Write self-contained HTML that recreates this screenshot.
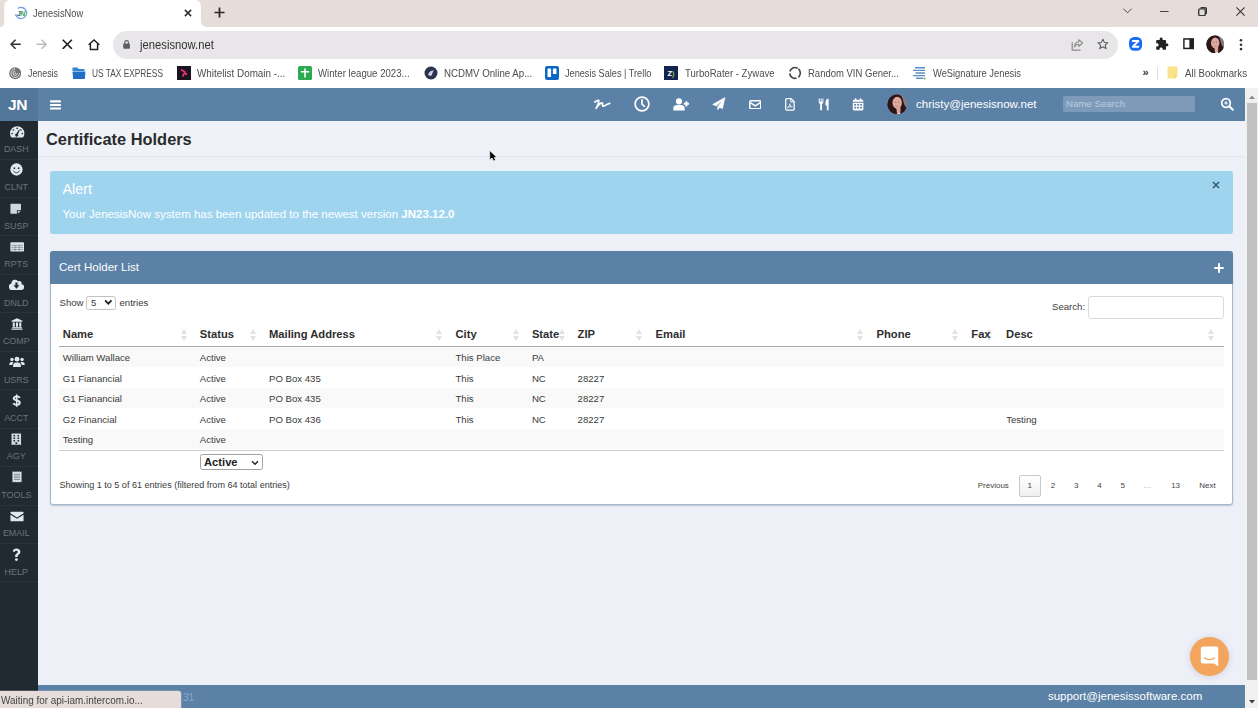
<!DOCTYPE html>
<html lang="en">
<head>
<meta charset="utf-8">
<title>JenesisNow</title>
<style>
*{box-sizing:border-box;margin:0;padding:0}
html,body{width:1258px;height:708px;overflow:hidden;background:#edf0f7;font-family:"Liberation Sans",Arial,sans-serif;font-size:12px;color:#333}
.abs{position:absolute}
#root{position:relative;width:1258px;height:708px;overflow:hidden;background:#edf0f7}
/* ---------- browser chrome ---------- */
#tabstrip{left:0;top:0;width:1258px;height:27px;background:#e6dcd9}
.ctext{font-family:"Liberation Sans",sans-serif;color:#3b3b3b;white-space:nowrap}
#toolbar{left:0;top:27px;width:1258px;height:34px;background:#fff}
#omni{left:112.500px;top:30.500px;width:1005px;height:28.500px;border-radius:14.250px;background:#e8e6e9}
#bookbar{left:0;top:61px;width:1258px;height:27px;background:#fff}
.bm{position:absolute;top:66px;height:14px;line-height:14px;font-size:11.3px;color:#4d4d4d;white-space:nowrap}
/* ---------- app ---------- */
#apphead{left:0;top:88px;width:1245px;height:33px;background:#5c81a6}
#logo{left:0;top:88px;width:38px;height:33px;background:#53779b;color:#fff;font-weight:bold;font-size:15.5px;line-height:33px;text-align:center;letter-spacing:-0.3px;padding-right:3px}
#side{left:0;top:121px;width:38px;height:587px;background:#222a31}
.sitem{position:absolute;left:0;width:38px;height:38.5px;border-bottom:1px solid #2b343c;text-align:center}
.sitem span{position:absolute;left:-4.700px;width:42px;top:22.900px;font-size:8.960px;line-height:11px;color:#68747e;text-align:center}
.sitem svg{position:absolute;left:9px;top:3px;width:14px;height:14px;fill:#e1e8ed}
#titlebar{left:38px;top:121px;width:1207px;height:36px;background:#f0f2f9;border-bottom:1px solid #e3e6ed}
#title{left:46px;top:128px;font-size:16.4px;font-weight:bold;color:#2b2b2b;line-height:22px;white-space:nowrap}
#alert{left:50px;top:170.800px;width:1182.500px;height:62.800px;background:#9fd4ef;border-radius:3px}
#card{left:50px;top:251px;width:1182.500px;height:253.600px;background:#fff;border:1px solid #a6b9cc;box-shadow:0 1px 1.500px rgba(110,130,160,.400);border-radius:3px}
#cardhead{left:50px;top:251px;width:1182.500px;height:33px;background:#5c81a6;border-radius:3px 3px 0 0}
.t{position:absolute;white-space:nowrap;line-height:14px;font-size:11px;color:#3a3a3a}
.th{z-index:2;position:absolute;white-space:nowrap;line-height:14px;font-size:11.200px;font-weight:bold;color:#2e2e2e;top:327px}
.row{position:absolute;left:59px;width:1165px;height:20.6px}
.odd{background:#f9f9f9}
.sort{position:absolute;top:329px;width:6px;height:12px}
.sort:before,.sort:after{content:"";position:absolute;left:0;border-left:3px solid transparent;border-right:3px solid transparent}
.sort:before{top:0;border-bottom:5px solid #e2e2e2}
.sort:after{top:7px;border-top:5px solid #e2e2e2}
.pg{position:absolute;top:479.600px;font-size:8px;line-height:12px;color:#555;white-space:nowrap;transform:translateX(-50%)}
#foot{z-index:0;left:38px;top:685.300px;width:1207px;height:23px;background:#5c81a6}
#status{left:0;top:690.700px;width:181.200px;height:18px;background:#e6dcd9;border-top-right-radius:3px;box-shadow:0 0 0 .500px rgba(255,255,255,.35)}
#sbar{left:1245px;top:88px;width:13px;height:620px;background:#f1f1f1}
#sthumb{left:1247px;top:103px;width:10px;height:576.500px;background:#c1c1c1}
</style>
</head>
<body>
<div id="root">

<!-- ======== browser chrome ======== -->
<div id="tabstrip" class="abs"></div>
<svg class="abs" style="left:0;top:0" width="210" height="27" viewBox="0 0 210 27"><path d="M0 27C2.800 27 4.300 25 4.300 22.500V6.500C4.300 2.500 6.500 0 10.500 0H194.900C198.900 0 200.900 2.500 200.900 6.500V20.500C200.900 25 203.500 27 208.500 27Z" fill="#fff"/></svg>
<div class="abs ctext" style="left:33.4px;top:5.600px;color:#4d4d4d;font-size:11.3px;line-height:14px;transform:scaleX(0.8242);transform-origin:0 0">JenesisNow</div>
<svg class="abs" style="left:13.800px;top:5.700px" width="14" height="14" viewBox="0 0 14 14"><circle cx="7" cy="7" r="5.600" fill="none" stroke="#7aa0e0" stroke-width="1.300" stroke-dasharray="28 7.200" transform="rotate(-125 7 7)"/><text x="6.900" y="9.500" font-family="Liberation Sans, sans-serif" font-size="7" font-weight="bold" font-style="italic" text-anchor="middle" letter-spacing="-0.300"><tspan fill="#2b5f8e">J</tspan><tspan fill="#35a347">N</tspan></text></svg>
<svg class="abs" style="left:183.600px;top:9px" width="8" height="8" viewBox="0 0 8 8"><path d="M0.900 0.900L7.100 7.100M7.100 0.900L0.900 7.100" stroke="#2e2e2e" stroke-width="1.500" fill="none"/></svg>
<svg class="abs" style="left:213.500px;top:7.400px" width="11" height="11" viewBox="0 0 11 11"><path d="M5.500 0.500V10.500M0.500 5.500H10.500" stroke="#2a2424" stroke-width="1.700" fill="none"/></svg>
<!-- window controls -->
<svg class="abs" style="left:1121.500px;top:7.300px" width="11" height="8" viewBox="0 0 11 8"><path d="M1.400 1.700L5.500 5.800L9.600 1.700" stroke="#4a4a4a" stroke-width="1" fill="none"/></svg>
<svg class="abs" style="left:1160.300px;top:10.800px" width="8.600" height="1.100" viewBox="0 0 8.600 1.100"><path d="M0 0.550H8.600" stroke="#444" stroke-width="1.100"/></svg>
<svg class="abs" style="left:1197.700px;top:6.700px" width="9.400" height="9.400" viewBox="0 0 9.400 9.400"><rect x="0.700" y="1.900" width="6.600" height="6.800" rx="1.400" fill="none" stroke="#3a3a3a" stroke-width="1.400"/><path d="M2.600 0.700H6.800A1.900 1.900 0 0 1 8.700 2.600V7" fill="none" stroke="#3a3a3a" stroke-width="1.400"/></svg>
<svg class="abs" style="left:1235.600px;top:7.200px" width="9" height="9" viewBox="0 0 9 9"><path d="M0.400 0.400L8.600 8.600M8.600 0.400L0.400 8.600" stroke="#333" stroke-width="1.100" fill="none"/></svg>

<div id="toolbar" class="abs"></div>
<div id="omni" class="abs"></div>
<!-- nav icons -->
<svg class="abs" style="left:9.600px;top:38.700px" width="11.200" height="10.600" viewBox="0 0 11.200 10.600"><path d="M10.800 5.300H1.600M5.600 0.800L1.100 5.300L5.600 9.800" stroke="#333" stroke-width="1.500" fill="none"/></svg>
<svg class="abs" style="left:35.600px;top:38.700px" width="11.200" height="10.600" viewBox="0 0 11.200 10.600"><path d="M0.400 5.300H9.600M5.600 0.800L10.100 5.300L5.600 9.800" stroke="#bcbcbc" stroke-width="1.500" fill="none"/></svg>
<svg class="abs" style="left:62.400px;top:38.700px" width="10.600" height="10.600" viewBox="0 0 10.600 10.600"><path d="M0.700 0.700L9.900 9.900M9.900 0.700L0.700 9.900" stroke="#222" stroke-width="1.600" fill="none"/></svg>
<svg class="abs" style="left:87.200px;top:37.600px" width="14" height="13" viewBox="0 0 14 13"><path d="M1.700 6.700L7 1.900L12.300 6.700M3.400 5.600V11.600H10.600V5.600" stroke="#222" stroke-width="1.500" fill="none" stroke-linejoin="miter"/></svg>
<svg class="abs" style="left:123.200px;top:40.200px" width="7.200" height="9" viewBox="0 0 9 11" preserveAspectRatio="none"><rect x="0.300" y="4.300" width="8.400" height="6.500" rx="1" fill="#5f5f63"/><path d="M2.200 4.800V3a2.300 2.300 0 0 1 4.600 0V4.800" stroke="#5f5f63" stroke-width="1.400" fill="none"/></svg>
<div class="abs ctext" style="left:140.3px;top:37px;font-size:13.6px;line-height:16px;color:#333;transform:scaleX(0.8275);transform-origin:0 0">jenesisnow.net</div>
<!-- right toolbar icons -->
<svg class="abs" style="left:1070px;top:38px" width="14" height="14" viewBox="0 0 14 14"><path d="M2.200 4.300V12.200H10.600" stroke="#8a8a8a" stroke-width="1.200" fill="none"/><path d="M8.800 1.700L12.600 5L8.800 8.300V6.300C6.400 6.300 5.200 7.300 4.400 9C4.600 6 6.200 4.100 8.800 3.800Z" stroke="#8a8a8a" stroke-width="1.100" fill="none" stroke-linejoin="round"/></svg>
<svg class="abs" style="left:1097.200px;top:38.400px" width="11.800" height="11.800" viewBox="0 0 14 14"><path d="M7 1.3L8.7 5.2L12.9 5.6L9.7 8.4L10.7 12.6L7 10.4L3.3 12.6L4.3 8.4L1.1 5.6L5.3 5.2Z" stroke="#555" stroke-width="1.2" fill="none" stroke-linejoin="round"/></svg>
<svg class="abs" style="left:1129.200px;top:37.200px" width="13.200" height="13.800" viewBox="0 0 14 14" preserveAspectRatio="none"><rect x="0" y="0" width="14" height="14" rx="5.600" fill="#1b6df2"/><path d="M4 4.100H10L4 9.900H10" stroke="#fff" stroke-width="1.900" fill="none" stroke-linejoin="round" stroke-linecap="round"/></svg>
<svg class="abs" style="left:1155px;top:37px" width="14" height="14" viewBox="0 0 24 24"><path fill="#222" d="M20.5 11H19V7c0-1.1-.9-2-2-2h-4V3.5a2.5 2.5 0 0 0-5 0V5H4c-1.1 0-2 .9-2 2v3.8h1.5c1.5 0 2.7 1.2 2.7 2.7S5 16.200 3.500 16.200H2V20c0 1.100.900 2 2 2h3.800v-1.500c0-1.500 1.200-2.700 2.700-2.700s2.700 1.200 2.700 2.700V22H17c1.100 0 2-.900 2-2v-4h1.500a2.500 2.500 0 0 0 0-5z"/></svg>
<svg class="abs" style="left:1182.600px;top:38.200px" width="11.800" height="11.400" viewBox="0 0 13 12" preserveAspectRatio="none"><rect x="1" y="1" width="11" height="10" fill="none" stroke="#222" stroke-width="1.6"/><rect x="7" y="1" width="5" height="10" fill="#222"/></svg>
<svg class="abs" style="left:1205.700px;top:34.900px" width="18.600" height="18.600" viewBox="0 0 21 21"><defs><clipPath id="av1"><circle cx="10.500" cy="10.500" r="10.200"/></clipPath><filter id="av1b"><feGaussianBlur stdDeviation=".450"/></filter></defs><g clip-path="url(#av1)"><rect width="21" height="21" fill="#857b80"/><g filter="url(#av1b)"><path d="M10.500 0.300C5 0.300 1.500 3 0.300 8L-0.500 16.500V22H21.500V16C19.500 14 17.500 12 16.800 8.500C16 4 14.500 0.300 10.500 0.300Z" fill="#2a1318"/><ellipse cx="10.400" cy="9" rx="4.800" ry="6.100" fill="#dcaa9e"/><path d="M9.300 13.500H13.900L13.500 21.500H10.500Z" fill="#d8a598"/><path d="M8 8.300H9.500M11.300 8.300H12.800" stroke="#8a5a55" stroke-width=".700"/><path d="M8.800 11.900C9.700 12.600 11.300 12.600 12.200 11.900" stroke="#b87a75" stroke-width=".700" fill="none"/><path d="M11 20.200L12.300 19.300L13.500 20.200V21.500H11Z" fill="#eee"/></g></g></svg>
<svg class="abs" style="left:1239px;top:37.500px" width="4" height="14" viewBox="0 0 4 14"><circle cx="2" cy="2.300" r="1.300" fill="#333"/><circle cx="2" cy="6.700" r="1.300" fill="#333"/><circle cx="2" cy="11.100" r="1.300" fill="#333"/></svg>

<div id="bookbar" class="abs"></div>
<!-- bookmarks -->
<svg class="abs" style="left:9.100px;top:67.300px" width="12.400" height="12.400" viewBox="0 0 13 13"><circle cx="6.500" cy="6.500" r="6.300" fill="#757575"/><path d="M6.500 2A4.500 4.500 0 1 0 11 6.500" fill="none" stroke="#e4e4e4" stroke-width="1"/><path d="M6.500 4.200A2.300 2.300 0 1 0 8.800 6.500" fill="none" stroke="#e4e4e4" stroke-width="1"/><circle cx="6.500" cy="6.500" r=".800" fill="#e4e4e4"/></svg>
<div class="bm" style="left:28.0px;transform:scaleX(0.7830);transform-origin:0 0">Jenesis</div>
<svg class="abs" style="left:72px;top:66px" width="14" height="14" viewBox="0 0 14 14"><path d="M0.500 1.500H5.500L6.800 3H12.500V5H0.500Z" fill="#2f86d6"/><path d="M0.500 5.500H13.500L12.800 13H1.200Z" fill="#1f6fc4"/></svg>
<div class="bm" style="left:92.0px;transform:scaleX(0.7374);transform-origin:0 0">US TAX EXPRESS</div>
<svg class="abs" style="left:177px;top:66px" width="14" height="14" viewBox="0 0 14 14"><rect width="14" height="14" fill="#1b1320"/><path d="M4 3.500L8 6L5.500 10.500" stroke="#e8336d" stroke-width="1.600" fill="none"/><circle cx="9" cy="8" r="1.200" fill="#e8336d"/></svg>
<div class="bm" style="left:196.7px;transform:scaleX(0.8736);transform-origin:0 0">Whitelist Domain -...</div>
<svg class="abs" style="left:298px;top:66px" width="14" height="14" viewBox="0 0 14 14"><rect width="14" height="14" rx="1.500" fill="#2da94f"/><path d="M2.800 5.800H11.200M7 2.500V11.500" stroke="#fff" stroke-width="1.600"/></svg>
<div class="bm" style="left:318.0px;transform:scaleX(0.8530);transform-origin:0 0">Winter league 2023...</div>
<svg class="abs" style="left:424px;top:66px" width="14" height="14" viewBox="0 0 14 14"><circle cx="7" cy="7" r="6.500" fill="#2b3350"/><path d="M4 9C5 5 8 4 10 4.500C8 6 9 8 7 10Z" fill="#cfd6e8"/></svg>
<div class="bm" style="left:444.0px;transform:scaleX(0.8566);transform-origin:0 0">NCDMV Online Ap...</div>
<svg class="abs" style="left:545px;top:66px" width="14" height="14" viewBox="0 0 14 14"><rect width="14" height="14" rx="2.200" fill="#0a67c2"/><rect x="2.500" y="2.500" width="3.600" height="8.500" rx="0.600" fill="#fff"/><rect x="7.900" y="2.500" width="3.600" height="5.500" rx="0.600" fill="#fff"/></svg>
<div class="bm" style="left:565.2px;transform:scaleX(0.8100);transform-origin:0 0">Jenesis Sales | Trello</div>
<svg class="abs" style="left:664px;top:66px" width="14" height="14" viewBox="0 0 14 14"><rect width="14" height="14" fill="#13254f"/><text x="7" y="10" font-family="Liberation Sans, sans-serif" font-size="7.500" font-weight="bold" text-anchor="middle" fill="#fff">Z<tspan fill="#7ac143">)</tspan></text></svg>
<div class="bm" style="left:685.0px;transform:scaleX(0.8478);transform-origin:0 0">TurboRater - Zywave</div>
<svg class="abs" style="left:788px;top:66px" width="14" height="14" viewBox="0 0 14 14"><circle cx="7" cy="7" r="5.300" fill="none" stroke="#444" stroke-width="1.600" stroke-dasharray="9.300 1.800" transform="rotate(-50 7 7)"/></svg>
<div class="bm" style="left:808.0px;transform:scaleX(0.8407);transform-origin:0 0">Random VIN Gener...</div>
<svg class="abs" style="left:913px;top:66px" width="13" height="14" viewBox="0 0 13 14"><path d="M2 1.800H12M0 4.400H12M2.500 7H12M0 9.600H12M3 12.200H10" stroke="#5b8fc2" stroke-width="1.400"/><circle cx="11.500" cy="12.400" r="1" fill="#58a55c"/></svg>
<div class="bm" style="left:932.7px;transform:scaleX(0.8259);transform-origin:0 0">WeSignature Jenesis</div>
<div class="abs" style="left:1142.400px;top:65.200px;line-height:14px;font-weight:bold;font-size:11px;color:#333">»</div>
<div class="abs" style="left:1157px;top:67px;width:1px;height:12.500px;background:#dddddd"></div>
<svg class="abs" style="left:1167px;top:66px" width="11" height="13" viewBox="0 0 11 13"><path d="M0.500 1.500a1 1 0 0 1 1-1H10.500V9.500L8 12.500H0.500Z" fill="#fbe38d"/><path d="M8 12.500V9.500H10.500Z" fill="#f3cf62"/></svg>
<div class="bm" style="left:1185.0px;transform:scaleX(0.8587);transform-origin:0 0">All Bookmarks</div>

<!-- ======== app ======== -->
<div id="apphead" class="abs"></div>
<div id="logo" class="abs">JN</div>

<!-- header icons -->
<svg class="abs" style="left:50px;top:100px" width="11" height="10" viewBox="0 0 11 10"><rect x="0" y="0.300" width="11" height="2.100" rx=".600" fill="#fff"/><rect x="0" y="3.900" width="11" height="2.100" rx=".600" fill="#fff"/><rect x="0" y="7.500" width="11" height="2.100" rx=".600" fill="#fff"/></svg>
<svg class="abs" style="left:594px;top:99px" width="17" height="11" viewBox="0 0 17 11"><path d="M0.900 3C2.200 1.900 3.600 1.200 4.700 1.400C5.100 3.600 3.600 7 2.100 9.400C3.600 6.800 6 4 8 3.800C9.300 3.800 7.800 6.800 8.900 7.200C10.500 7.600 12.500 4.900 15.700 4.300" fill="none" stroke="#fff" stroke-width="1.700" stroke-linecap="round" stroke-linejoin="round"/></svg>
<svg class="abs" style="left:633.600px;top:95.800px" width="16" height="16" viewBox="0 0 16 16"><circle cx="8" cy="8" r="6.900" fill="none" stroke="#fff" stroke-width="1.700"/><path d="M8 3.900V8.200L10.400 10.300" fill="none" stroke="#fff" stroke-width="1.700" stroke-linecap="round" stroke-linejoin="round"/></svg>
<svg class="abs" style="left:673px;top:98px" width="17" height="13" viewBox="0 0 17 13"><circle cx="6" cy="3.300" r="3.100" fill="#fff"/><path d="M0.300 12.500V10.800A3.700 3.700 0 0 1 4 7.100H8A3.700 3.700 0 0 1 11.700 10.800V12.500Z" fill="#fff"/><path d="M13.400 3.200V8.400M10.800 5.800H16" stroke="#fff" stroke-width="1.900" fill="none"/></svg>
<svg class="abs" style="left:712.400px;top:97.300px" width="13.600" height="13.600" viewBox="0 0 15 15"><path d="M14.300 0.600L0.700 8.200L4.600 9.900L12 3.300L6.200 10.800V14.200L8.600 11.600L11.600 12.900Z" fill="#fff" stroke="#fff" stroke-width=".600" stroke-linejoin="round"/></svg>
<svg class="abs" style="left:748.800px;top:99.500px" width="12.600" height="9.600" viewBox="0 0 12.600 9.600"><rect x="0.800" y="0.800" width="11" height="8" rx="1.200" fill="none" stroke="#fff" stroke-width="1.500"/><path d="M1.300 2.600L6.300 5.900L11.300 2.600" fill="none" stroke="#fff" stroke-width="1.400"/></svg>
<svg class="abs" style="left:785px;top:98px" width="9.900" height="12.700" viewBox="0 0 11 14"><path d="M1.800 0.700H6.800L10.200 4.100V12.300A1 1 0 0 1 9.200 13.300H1.800A1 1 0 0 1 0.800 12.300V1.700A1 1 0 0 1 1.800 0.700Z" fill="none" stroke="#fff" stroke-width="1.400"/><path d="M6.500 1V4.400H10" fill="none" stroke="#fff" stroke-width="1.100"/><path d="M2.800 10.600C4.200 9.800 5.300 7.800 5.300 6.300C5.300 7.800 6.400 9.300 8.200 9.600C6.300 9.500 4.300 9.900 2.800 10.600Z" fill="none" stroke="#fff" stroke-width=".900" stroke-linejoin="round"/></svg>
<svg class="abs" style="left:817.600px;top:97.800px" width="11.700" height="12.800" viewBox="0 0 13 14"><path d="M0.800 0.500V4.300A2.400 2.400 0 0 0 2.400 6.500V13.500H4.400V6.500A2.400 2.400 0 0 0 6 4.300V0.500H5V4H4V0.500H2.900V4H1.900V0.500Z" fill="#fff"/><path d="M11.800 0.500C9.700 0.700 8.300 2.700 8.300 5.300V8.300H9.800V13.500H11.800Z" fill="#fff"/></svg>
<svg class="abs" style="left:851.500px;top:97.900px" width="12.200" height="12.800" viewBox="0 0 13 14"><path d="M0.700 4.200V3.200A1.200 1.200 0 0 1 1.900 2H11.100A1.200 1.200 0 0 1 12.300 3.200V4.200Z" fill="#fff"/><rect x="2.900" y="0.400" width="1.700" height="3" rx=".500" fill="#fff"/><rect x="8.400" y="0.400" width="1.700" height="3" rx=".500" fill="#fff"/><path d="M0.700 5.200H12.300V12.400A1.200 1.200 0 0 1 11.100 13.600H1.900A1.200 1.200 0 0 1 0.700 12.400Z" fill="#fff"/><g fill="#5c81a6"><rect x="2.300" y="6.500" width="2" height="1.800"/><rect x="5.500" y="6.500" width="2" height="1.800"/><rect x="8.700" y="6.500" width="2" height="1.800"/><rect x="2.300" y="9.700" width="2" height="1.800"/><rect x="5.500" y="9.700" width="2" height="1.800"/><rect x="8.700" y="9.700" width="2" height="1.800"/></g></svg>
<svg class="abs" style="left:887.300px;top:93.600px" width="20.600" height="20.600" viewBox="0 0 21 21"><defs><clipPath id="av2"><circle cx="10.500" cy="10.500" r="10.200"/></clipPath><filter id="av2b"><feGaussianBlur stdDeviation=".450"/></filter></defs><g clip-path="url(#av2)"><rect width="21" height="21" fill="#857b80"/><g filter="url(#av2b)"><path d="M10.500 0.300C5 0.300 1.500 3 0.300 8L-0.500 16.500V22H21.500V16C19.500 14 17.500 12 16.800 8.500C16 4 14.500 0.300 10.500 0.300Z" fill="#2a1318"/><ellipse cx="10.400" cy="9" rx="4.800" ry="6.100" fill="#dcaa9e"/><path d="M9.300 13.500H13.900L13.500 21.500H10.500Z" fill="#d8a598"/><path d="M8 8.300H9.500M11.300 8.300H12.800" stroke="#8a5a55" stroke-width=".700"/><path d="M8.800 11.900C9.700 12.600 11.300 12.600 12.200 11.900" stroke="#b87a75" stroke-width=".700" fill="none"/><path d="M11 20.200L12.300 19.300L13.500 20.200V21.500H11Z" fill="#eee"/></g></g></svg>
<div class="abs" style="left:916px;top:97px;font-size:11.520px;line-height:14px;color:#fff;white-space:nowrap">christy@jenesisnow.net</div>
<div class="abs" style="left:1063px;top:96px;width:132px;height:16px;background:#7d9bb9;border-radius:2px"></div>
<div class="abs" style="left:1066px;top:98px;font-size:9.700px;line-height:12px;color:#bccde0;white-space:nowrap">Name Search</div>
<svg class="abs" style="left:1220px;top:97px" width="14" height="14" viewBox="0 0 14 14"><circle cx="6" cy="6" r="4.300" fill="none" stroke="#fff" stroke-width="1.700"/><path d="M9.300 9.300L12.800 12.800" stroke="#fff" stroke-width="2" stroke-linecap="round"/><path d="M6 4.200V7.800M4.200 6H7.800" stroke="#fff" stroke-width="1.100"/></svg>
<div id="side" class="abs"></div>
<div class="sitem" style="top:121.00px"><svg style="left:8.600px;top:3.500px;width:16.400px;height:14.350px" viewBox="0 0 16 14"><path d="M8 1.200A7 7 0 0 0 1 8.200c0 1.300.350 2.500 1 3.600.150.250.400.400.700.400h10.600c.300 0 .550-.150.700-.400.650-1.100 1-2.300 1-3.600a7 7 0 0 0-7-7z"/><g fill="#222a31"><circle cx="8" cy="3.300" r=".800"/><circle cx="4.300" cy="4.900" r=".800"/><circle cx="11.700" cy="4.900" r=".800"/><circle cx="3" cy="8.400" r=".800"/><circle cx="13" cy="8.400" r=".800"/><path d="M7.300 8.300L9.900 4.300l.800.400-1.900 4.300a1.500 1.500 0 1 1-1.500-.700z"/></g></svg><span>DASH</span></div>
<div class="sitem" style="top:159.45px"><svg style="left:10.200px;top:3.500px;width:13px;height:13px" viewBox="0 0 14 14"><circle cx="7" cy="7" r="6.600"/><g fill="#222a31"><circle cx="4.700" cy="5.600" r=".950"/><circle cx="9.300" cy="5.600" r=".950"/></g><path d="M3.900 8.600c.700 1.300 1.800 1.900 3.100 1.900s2.400-.600 3.100-1.900" fill="none" stroke="#222a31" stroke-width=".900" stroke-linecap="round"/></svg><span>CLNT</span></div>
<div class="sitem" style="top:197.90px"><svg style="left:10.400px;top:4.900px;width:11.400px;height:11.400px;fill:#cdd7df" viewBox="0 0 14 14"><path d="M1.300.800h11.400a.800.800 0 0 1 .800.800V8.500H9.300a.800.800 0 0 0-.800.800v4H1.300a.800.800 0 0 1-.800-.800V1.600a.800.800 0 0 1 .800-.800z"/><path d="M13.300 9.600L9.600 13.300V9.600z"/></svg><span>SUSP</span></div>
<div class="sitem" style="top:236.35px"><svg style="left:9.500px;top:5.700px;width:14.400px;height:9.900px" viewBox="0 0 16 11"><rect x=".400" y=".400" width="15.200" height="10.200" rx="1.200" fill="#dbe3e9"/><path d="M1.600 3.700H14.400M1.600 6H14.400M1.600 8.300H14.400M5.700 3.700V9.800M10.300 3.700V9.800" stroke="#7b8893" stroke-width=".800" fill="none"/></svg><span>RPTS</span></div>
<div class="sitem" style="top:274.80px"><svg style="left:9.200px;top:4.600px;width:15px;height:12px" viewBox="0 0 16 13"><path d="M13.400 5.600a2.400 2.400 0 0 0-2.200-3.300c-.450 0-.900.150-1.250.400A4 4 0 0 0 2.500 4.700v.200A3.600 3.600 0 0 0 3.600 12h9.200a3.200 3.200 0 0 0 .600-6.400z"/><path d="M6.800 3.700h2.400v3.100h2L8 10.500 4.800 6.800h2z" fill="#222a31"/></svg><span>DNLD</span></div>
<div class="sitem" style="top:313.25px"><svg style="left:10.600px;top:4.600px;width:12px;height:12px" viewBox="0 0 14 14"><path d="M7 .400l6.400 2.800v1.300H.600V3.200z"/><rect x="2" y="5.200" width="2.400" height="5"/><rect x="5.800" y="5.200" width="2.400" height="5"/><rect x="9.600" y="5.200" width="2.400" height="5"/><rect x="1.300" y="10.700" width="11.400" height="1.300"/><rect x=".500" y="12.400" width="13" height="1.300"/></svg><span>COMP</span></div>
<div class="sitem" style="top:351.70px"><svg style="left:8.7px;top:4.6px;width:16px;height:12px" viewBox="0 0 18 13"><circle cx="9" cy="3.300" r="2.700"/><circle cx="3.300" cy="3.700" r="1.900"/><circle cx="14.700" cy="3.700" r="1.900"/><path d="M4.600 12.200V10.600a3.600 3.600 0 0 1 3.600-3.600h1.600a3.600 3.600 0 0 1 3.600 3.600v1.600z"/><path d="M.300 9.800V9a2.600 2.600 0 0 1 2.600-2.600h1a3 3 0 0 1 1.200.300A4.600 4.600 0 0 0 3.700 9.800z"/><path d="M17.700 9.800V9a2.600 2.600 0 0 0-2.600-2.600h-1a3 3 0 0 0-1.200.300 4.600 4.600 0 0 1 1.400 3.100z"/></svg><span>USRS</span></div>
<div class="sitem" style="top:390.15px"><svg style="left:11.900px;top:3.550px;width:9.400px;height:13.200px" viewBox="0 0 10 16" preserveAspectRatio="none"><path d="M8.300 4.800C7.700 3.500 6.500 2.900 5 2.900C3.200 2.900 1.900 3.800 1.900 5.200C1.900 6.600 3.100 7.200 5 7.700C7 8.200 8.300 8.900 8.300 10.600C8.300 12.200 6.900 13.100 5 13.100C3.300 13.100 2.100 12.400 1.500 11" fill="none" stroke="#e1e8ed" stroke-width="2.200"/><path d="M5 0.500V15.500" stroke="#e1e8ed" stroke-width="1.700"/></svg><span>ACCT</span></div>
<div class="sitem" style="top:428.60px"><svg style="left:11.200px;top:4.300px;width:10.600px;height:11.800px;fill:#d0dae3" viewBox="0 0 12 14" preserveAspectRatio="none"><path d="M1.200.500h9.600a.600.600 0 0 1 .600.600V13h.300v.800H.300V13h.300V1.100a.600.600 0 0 1 .600-.600z"/><g fill="#222a31"><rect x="2.800" y="2.300" width="1.800" height="1.800"/><rect x="7.400" y="2.300" width="1.800" height="1.800"/><rect x="2.800" y="5.300" width="1.800" height="1.800"/><rect x="7.400" y="5.300" width="1.800" height="1.800"/><rect x="2.800" y="8.300" width="1.800" height="1.800"/><rect x="7.400" y="8.300" width="1.800" height="1.800"/><rect x="5" y="11" width="2" height="2.200"/></g></svg><span>AGY</span></div>
<div class="sitem" style="top:467.05px"><svg style="left:11.700px;top:4.300px;width:10px;height:11.800px;fill:#d5dee6" viewBox="0 0 11 14" preserveAspectRatio="none"><path d="M.500.300l1.250.900L3 .300l1.250.900L5.500.300l1.250.900L8 .300l1.250.900L10.500.300v13.400l-1.250-.900-1.250.900-1.250-.900-1.250.900-1.250-.900L3 13.700l-1.250-.900-1.250.900z"/><g fill="#6d7a86"><rect x="2.200" y="3.400" width="6.600" height=".900"/><rect x="2.200" y="5.500" width="6.600" height=".900"/><rect x="2.200" y="7.600" width="6.600" height=".900"/><rect x="2.200" y="9.700" width="6.600" height=".900"/></g></svg><span>TOOLS</span></div>
<div class="sitem" style="top:505.50px"><svg style="left:9.7px;top:5.1px;width:14px;height:11px" viewBox="0 0 16 12"><path d="M1.500.500h13a1 1 0 0 1 1 1v.700L8 7 .500 2.200V1.500a1 1 0 0 1 1-1z"/><path d="M.500 3.900L8 8.700l7.500-4.800v6.600a1 1 0 0 1-1 1h-13a1 1 0 0 1-1-1z"/></svg><span>EMAIL</span></div>
<div class="sitem" style="top:543.95px"><svg style="left:12.2px;top:3.6px;width:9px;height:14px" viewBox="0 0 10 15"><path d="M5 .300c2.500 0 4.300 1.500 4.300 3.700 0 1.700-.900 2.500-1.900 3.200-.800.600-1.100.900-1.100 1.700v.700H3.500V8.700c0-1.500.700-2.200 1.600-2.800.900-.600 1.300-1 1.300-1.700 0-.800-.600-1.300-1.500-1.300-1 0-1.600.500-2 1.400L.700 3.200C1.400 1.400 2.900.300 5 .300z"/><circle cx="4.900" cy="12.600" r="1.600"/></svg><span>HELP</span></div>
<div id="titlebar" class="abs"></div>
<div id="title" class="abs">Certificate Holders</div>

<div id="alert" class="abs"></div>
<div class="abs" style="left:62.500px;top:181.400px;font-size:14.400px;line-height:17px;color:#fff;white-space:nowrap">Alert</div>
<div class="abs" style="left:62.500px;top:206.700px;font-size:11.520px;line-height:14px;color:#fff;white-space:nowrap">Your JenesisNow system has been updated to the newest version <b>JN23.12.0</b></div>

<div id="card" class="abs"></div>
<div id="cardhead" class="abs"></div>
<div class="abs" style="left:59px;top:260px;font-size:11.520px;line-height:14px;color:#fff;white-space:nowrap">Cert Holder List</div>

<!-- card content -->
<div class="t" style="left:59.500px;top:296px;font-size:9.600px">Show</div>
<div class="abs" style="left:86.300px;top:295.500px;width:30.200px;height:14px;border:1px solid #c2c2c2;border-radius:2.500px;background:#fff"></div>
<div class="t" style="left:91px;top:296px;font-size:9.600px">5</div>
<svg class="abs" style="left:104.300px;top:299.300px" width="8.600" height="6.400" viewBox="0 0 8 6"><path d="M1 1.200L4 4.300L7 1.200" fill="none" stroke="#222" stroke-width="1.700"/></svg>
<div class="t" style="left:119.500px;top:296px;font-size:9.600px">entries</div>
<div class="t" style="left:1052px;top:300px;font-size:9.600px">Search:</div>
<div class="abs" style="left:1088px;top:295.500px;width:136px;height:23px;border:1px solid #dadada;border-radius:3px;background:#fff"></div>
<div class="th" style="left:62.8px">Name</div>
<div class="th" style="left:199.8px">Status</div>
<div class="th" style="left:269.0px">Mailing Address</div>
<div class="th" style="left:455.5px">City</div>
<div class="th" style="left:531.9px">State</div>
<div class="th" style="left:577.6px">ZIP</div>
<div class="th" style="left:655.5px">Email</div>
<div class="th" style="left:876.5px">Phone</div>
<div class="th" style="left:971.3px">Fax</div>
<div class="th" style="left:1006.1px">Desc</div>
<div class="sort" style="left:181.0px"></div>
<div class="sort" style="left:249.7px"></div>
<div class="sort" style="left:436.0px"></div>
<div class="sort" style="left:512.8px"></div>
<div class="sort" style="left:558.9px"></div>
<div class="sort" style="left:636.0px"></div>
<div class="sort" style="left:857.2px"></div>
<div class="sort" style="left:951.7px"></div>
<div class="sort" style="left:986.0px"></div>
<div class="sort" style="left:1208.3px"></div>
<div class="abs" style="left:59px;top:345.700px;width:1165px;height:1px;background:#aaa"></div>
<div class="row odd" style="top:346.8px"></div>
<div class="t" style="left:62.8px;top:351.0px;font-size:9.600px">William Wallace</div>
<div class="t" style="left:199.8px;top:351.0px;font-size:9.600px">Active</div>
<div class="t" style="left:455.5px;top:351.0px;font-size:9.600px">This Place</div>
<div class="t" style="left:531.9px;top:351.0px;font-size:9.600px">PA</div>
<div class="row" style="top:367.3px"></div>
<div class="t" style="left:62.8px;top:371.5px;font-size:9.600px">G1 Fianancial</div>
<div class="t" style="left:199.8px;top:371.5px;font-size:9.600px">Active</div>
<div class="t" style="left:269.0px;top:371.5px;font-size:9.600px">PO Box 435</div>
<div class="t" style="left:455.5px;top:371.5px;font-size:9.600px">This</div>
<div class="t" style="left:531.9px;top:371.5px;font-size:9.600px">NC</div>
<div class="t" style="left:577.6px;top:371.5px;font-size:9.600px">28227</div>
<div class="row odd" style="top:387.8px"></div>
<div class="t" style="left:62.8px;top:392.0px;font-size:9.600px">G1 Fianancial</div>
<div class="t" style="left:199.8px;top:392.0px;font-size:9.600px">Active</div>
<div class="t" style="left:269.0px;top:392.0px;font-size:9.600px">PO Box 435</div>
<div class="t" style="left:455.5px;top:392.0px;font-size:9.600px">This</div>
<div class="t" style="left:531.9px;top:392.0px;font-size:9.600px">NC</div>
<div class="t" style="left:577.6px;top:392.0px;font-size:9.600px">28227</div>
<div class="row" style="top:408.3px"></div>
<div class="t" style="left:62.8px;top:412.5px;font-size:9.600px">G2 Financial</div>
<div class="t" style="left:199.8px;top:412.5px;font-size:9.600px">Active</div>
<div class="t" style="left:269.0px;top:412.5px;font-size:9.600px">PO Box 436</div>
<div class="t" style="left:455.5px;top:412.5px;font-size:9.600px">This</div>
<div class="t" style="left:531.9px;top:412.5px;font-size:9.600px">NC</div>
<div class="t" style="left:577.6px;top:412.5px;font-size:9.600px">28227</div>
<div class="t" style="left:1006.2px;top:412.5px;font-size:9.600px">Testing</div>
<div class="row odd" style="top:428.8px"></div>
<div class="t" style="left:62.8px;top:433.0px;font-size:9.600px">Testing</div>
<div class="t" style="left:199.8px;top:433.0px;font-size:9.600px">Active</div>
<div class="abs" style="left:59px;top:449.600px;width:1165px;height:1px;background:#cdcdcd"></div>
<div class="abs" style="left:200px;top:454px;width:62.500px;height:16px;border:1px solid #a2a2a2;border-radius:2.500px;background:#fff"></div>
<div class="t" style="left:204px;top:455px;font-size:11.200px;font-weight:bold;color:#222">Active</div>
<svg class="abs" style="left:250.500px;top:459.500px" width="8" height="6" viewBox="0 0 8 6"><path d="M1 1.200L4 4.300L7 1.200" fill="none" stroke="#222" stroke-width="1.400"/></svg>
<div class="t" style="left:59.500px;top:477.500px;font-size:9.050px">Showing 1 to 5 of 61 entries (filtered from 64 total entries)</div>
<div class="abs" style="left:1019px;top:475px;width:22px;height:21.500px;border:1px solid #c8c8c8;border-radius:2px;background:linear-gradient(#fff,#f0f0f0)"></div>
<div class="pg" style="left:993.3px;color:#444">Previous</div>
<div class="pg" style="left:1029.8px;color:#444">1</div>
<div class="pg" style="left:1053.0px;color:#444">2</div>
<div class="pg" style="left:1076.2px;color:#444">3</div>
<div class="pg" style="left:1099.5px;color:#444">4</div>
<div class="pg" style="left:1122.8px;color:#444">5</div>
<div class="pg" style="left:1147.3px;color:#999">…</div>
<div class="pg" style="left:1175.6px;color:#444">13</div>
<div class="pg" style="left:1207.5px;color:#444">Next</div>
<svg class="abs" style="left:1211.500px;top:181px" width="8" height="8" viewBox="0 0 8 8"><path d="M1 1L7 7M7 1L1 7" stroke="#3c5b76" stroke-width="1.600" fill="none"/></svg>
<svg class="abs" style="left:1213.500px;top:262.500px" width="10" height="10" viewBox="0 0 10 10"><path d="M5 0.300V9.700M0.300 5H9.700" stroke="#fff" stroke-width="2" fill="none"/></svg>
<div class="abs" style="left:1189.500px;top:636.500px;width:39.500px;height:39.500px;border-radius:50%;background:#f3a55e;box-shadow:0 1px 6px rgba(120,120,140,.25)"></div>
<svg class="abs" style="left:1199.500px;top:646px" width="20" height="21" viewBox="0 0 20 21"><path d="M3 0.600H16A2.200 2.200 0 0 1 18.200 2.800V20.400L14.300 17.600H3A2.200 2.200 0 0 1 0.800 15.400V2.800A2.200 2.200 0 0 1 3 0.600Z" fill="#fff"/><path d="M4.300 11.800C7 14.300 12 14.300 14.700 11.800" fill="none" stroke="#f3a55e" stroke-width="1.200" stroke-linecap="round"/></svg>
<svg class="abs" style="left:489px;top:150px" width="10" height="13" viewBox="0 0 10 13"><path d="M0.700 0.400V9.900L3 8L4.700 11.100L6.600 10.100L5.100 7.400H7.900Z" fill="#050505" stroke="#f4f5fb" stroke-width=".700" stroke-linejoin="round"/></svg>
<div id="foot" class="abs"></div>
<div class="abs" style="right:55.700px;top:689px;font-size:11.520px;line-height:15px;color:#fff;white-space:nowrap">support@jenesissoftware.com</div>
<div id="sbar" class="abs"></div>
<div id="sthumb" class="abs"></div>
<div class="abs" style="left:182.800px;top:689.700px;font-size:11px;letter-spacing:-0.600px;line-height:14px;color:#86a6c7;white-space:nowrap">31</div>
<svg class="abs" style="left:1249px;top:94.500px" width="6" height="4" viewBox="0 0 6 4"><path d="M0 4L3 0.500L6 4Z" fill="#8d8d8d"/></svg>
<svg class="abs" style="left:1249px;top:699.500px" width="6" height="4" viewBox="0 0 6 4"><path d="M0 0L3 3.500L6 0Z" fill="#3f3f3f"/></svg>
<div id="status" class="abs"></div>
<div class="abs ctext" style="left:1.2px;top:692.500px;font-size:11.3px;line-height:14px;color:#444;transform:scaleX(0.8771);transform-origin:0 0">Waiting for api-iam.intercom.io...</div>

</div>
</body>
</html>
